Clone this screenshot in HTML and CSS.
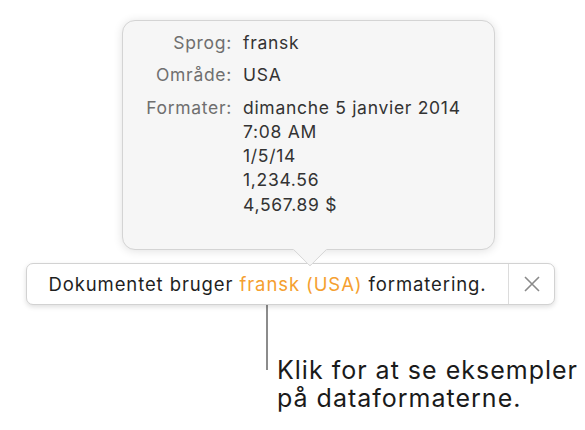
FILE: index.html
```html
<!DOCTYPE html>
<html lang="da">
<head>
    <meta charset="UTF-8">
    <meta name="viewport" content="width=device-width, initial-scale=1.0">
    <title>Dataformater</title>
    <link rel="stylesheet" href="styles.css">
</head>
<body>
    <div class="stage">
        <div class="popover">
            <div class="info">
                <span class="label">Sprog:</span>
                <span class="value">fransk</span>

                <span class="label">Område:</span>
                <span class="value">USA</span>

                <span class="label">Formater:</span>
                <span class="value">
                    dimanche 5 janvier 2014<br>
                    7:08 AM<br>
                    1/5/14<br>
                    1,234.56<br>
                    4,567.89 $
                </span>
            </div>
        </div>

        <div class="bar">
            <div class="bar-text">Dokumentet bruger <span class="lang">fransk (USA)</span> formatering.</div>
            <div class="close">
                <svg width="16" height="16" viewBox="0 0 16 16">
                    <path d="M1 1 L15 15 M15 1 L1 15" stroke="#8a8a8a" stroke-width="1.6" fill="none"/>
                </svg>
            </div>
        </div>

        <div class="callout">
            <div class="callout-line"></div>
            <p class="callout-text">Klik for at se eksempler<br>på dataformaterne.</p>
        </div>
    </div>
</body>
</html>
```

FILE: styles.css
```css
body {
    margin: 0;
    background: #fff;
    font-family: Inter, Roboto, sans-serif;
}

.stage {
    width: 585px;
    height: 430px;
    padding-top: 20px;
    box-sizing: border-box;
}

/* popover above the bar */
.popover {
    position: relative;
    z-index: 1;
    margin-left: 122px;
    width: 373px;
    height: 230px;
    box-sizing: border-box;
    background: #f6f6f6;
    border: 1px solid #d4d4d4;
    border-radius: 13px;
    box-shadow: 0 1px 10px rgba(0, 0, 0, 0.12);
    padding-top: 10px;
}

.popover:after {
    content: "";
    position: absolute;
    left: 175px;
    bottom: -13px;
    width: 23px;
    height: 23px;
    background: #f6f6f6;
    border-right: 1px solid #d4d4d4;
    border-bottom: 1px solid #d4d4d4;
    transform: rotate(45deg);
    border-bottom-right-radius: 3px;
}

.info {
    display: grid;
    grid-template-columns: 109px auto;
    column-gap: 11px;
    row-gap: 8px;
    font-size: 17.5px;
    letter-spacing: 0.7px;
    line-height: 24.3px;
}

.label {
    text-align: right;
    color: #6f6f6f;
}

.value {
    color: #333;
}

/* the notice bar */
.bar {
    position: relative;
    display: flex;
    margin-top: 13px;
    margin-left: 26px;
    width: 529px;
    height: 42px;
    box-sizing: border-box;
    background: #fff;
    border: 1px solid #d2d2d2;
    border-radius: 7px;
    box-shadow: 0 2px 5px rgba(0, 0, 0, 0.13);
}

.bar-text {
    flex: 1;
    display: flex;
    align-items: center;
    justify-content: center;
    font-size: 18.5px;
    letter-spacing: 0.9px;
    color: #1f1f1f;
    white-space: pre;
}

.lang {
    color: #f5a030;
}

.close {
    width: 45px;
    border-left: 1px solid #dcdcdc;
    display: flex;
    align-items: center;
    justify-content: center;
}

/* callout */
.callout {
    display: flex;
    align-items: flex-start;
    margin-left: 266px;
}

.callout-line {
    width: 2px;
    height: 65px;
    background: #8c8c8c;
}

.callout-text {
    margin: 51px 0 0 9px;
    font-size: 25px;
    letter-spacing: 1px;
    line-height: 28px;
    color: #1a1a1a;
}
```
